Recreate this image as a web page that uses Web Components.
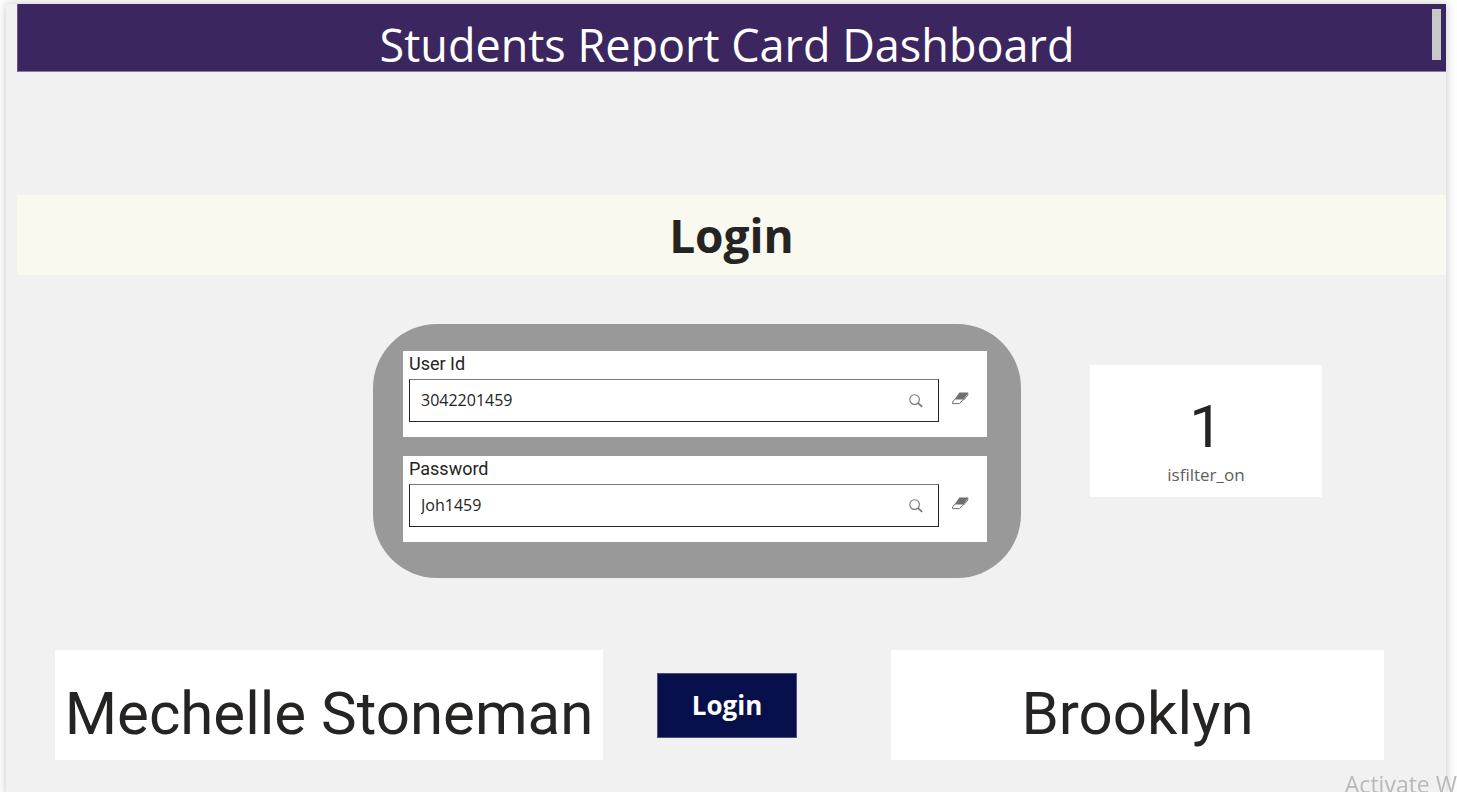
<!DOCTYPE html>
<html lang="en">
<head>
<meta charset="utf-8">
<title>Students Report Card Dashboard</title>
<style>
  html { height: 100%; }
  body { margin: 0; min-height: 100%; background: #fdfdfd; font-family: "Open Sans", "Noto Sans", sans-serif; color: #252423; }
</style>
</head>
<body>
<report-page>
  <report-header>Students Report Card Dashboard</report-header>
  <section-banner>Login</section-banner>
  <login-row>
    <login-panel slot="form">
      <slicer-field label="User Id" value="3042201459"></slicer-field>
      <slicer-field label="Password" value="Joh1459"></slicer-field>
    </login-panel>
    <value-card slot="status">1<span slot="caption">isfilter_on</span></value-card>
  </login-row>
  <result-row>
    <value-card slot="student">Mechelle Stoneman</value-card>
    <action-button slot="action">Login</action-button>
    <value-card slot="school">Brooklyn</value-card>
  </result-row>
</report-page>
<system-watermark>Activate W</system-watermark>

<script>
const define = (name, html, setup) => {
  customElements.define(name, class extends HTMLElement {
    constructor() {
      super();
      const template = document.createElement('template');
      template.innerHTML = html;
      this.attachShadow({ mode: 'open' }).append(template.content.cloneNode(true));
    }
    connectedCallback() { if (setup) setup(this, this.shadowRoot); }
  });
};

define('report-page', `
  <style>
    :host { display: block; padding: 4px 11px 0 6px; box-sizing: border-box; height: 100vh; overflow: hidden; }
    main { box-sizing: border-box; min-height: 100vh; padding-left: 11px; background: #f1f1f1; border-radius: 3px; box-shadow: 0 0 10px rgba(0,0,0,.22); }
  </style>
  <main><slot></slot></main>`);

define('report-header', `
  <style>
    :host { display: block; position: relative; box-sizing: border-box; height: 68px; padding-bottom: 5px; background: #3b2660; border-left: 1px solid #6a5590; border-bottom: 1px solid #8a76a8; }
    h1 { margin: 0; height: 62px; overflow: hidden; padding-right: 10px; text-align: center; font-weight: 400; font-size: 45px; line-height: 82px; color: #fff; white-space: nowrap; }
    i { position: absolute; top: 5px; right: 5px; width: 9px; height: 51px; background: #c8c8c8; }
  </style>
  <h1><slot></slot></h1><i></i>`);

define('section-banner', `
  <style>
    :host { display: block; margin-top: 123px; background: #f9f9f0; }
    h2 { margin: 0; text-align: center; font-size: 46px; line-height: 80px; font-weight: 700; }
  </style>
  <h2><slot></slot></h2>`);

define('login-row', `
  <style>
    :host { display: grid; margin-top: 49px; grid-template-columns: 356fr 648fr 69fr 232fr 124fr; align-items: start; }
    .form { grid-column: 2; min-width: 0; }
    .status { grid-column: 4; min-width: 0; margin-top: 41px; }
  </style>
  <div class="form"><slot name="form"></slot></div>
  <div class="status"><slot name="status"></slot></div>`);

define('login-panel', `
  <style>
    :host { display: flex; flex-direction: column; gap: 19px; padding: 27px 34px 36px 30px; border-radius: 64px; background: #999; }
  </style>
  <slot></slot>`);

define('slicer-field', `
  <style>
    :host { display: block; box-sizing: border-box; padding: 0 6px 15px; background: #fff; }
    label { display: block; font: 18px/25px Roboto, sans-serif; height: 28px; }
    .row { display: flex; align-items: center; }
    .box { flex: 1; min-width: 0; display: flex; align-items: center; box-sizing: border-box; height: 43px; border: 1px solid #252423; border-top-color: #777; padding: 0 9px 0 11px; }
    input { flex: 1; min-width: 0; border: 0; outline: 0; padding: 0 0 2px; background: none; color: #252423; font: 16px/24px "Open Sans", "Noto Sans", sans-serif; }
    button { border: 0; background: none; padding: 0; display: flex; justify-content: center; width: 26px; }
    .clear { width: 42px; padding-bottom: 4px; }
  </style>
  <label for="field"></label>
  <div class="row">
    <div class="box">
      <input id="field" type="text">
      <button type="button" aria-label="Search"><svg width="14" height="14" viewBox="0 0 14 14" fill="none" stroke="#757575"><circle cx="5.6" cy="5.6" r="4.8" stroke-width="1.1"/><path d="M9.1 9.1l4 3.8" stroke-width="1.7"/></svg></button>
    </div>
    <button class="clear" type="button" aria-label="Clear selection"><svg width="17" height="13" viewBox="0 0 17 13"><path d="M7.4 .5H16.4L11.6 7.4H2.5Z" fill="#6f6f6f"/><path d="M2.8 7.2L.6 10V11.6H7.5L11.3 7.4M15.8 1V3L11.6 8.2" fill="none" stroke="#6f6f6f"/></svg></button>
  </div>`, (host, root) => {
  root.querySelector('label').textContent = host.getAttribute('label');
  root.querySelector('input').value = host.getAttribute('value');
});

define('value-card', `
  <style>
    :host { display: flex; flex-direction: column; box-sizing: border-box; background: #fff; text-align: center; white-space: nowrap; }
    .value { height: 98px; padding-top: 12px; font: 60px/104px Roboto, sans-serif; }
    .value.captioned { height: 88px; padding-top: 10px; }
    .caption { font-size: 17px; line-height: 24px; color: #605e5c; }
    ::slotted(span) { display: block; height: 34px; }
  </style>
  <div class="value"><slot></slot></div>
  <div class="caption"><slot name="caption"></slot></div>`, (host, root) => {
  root.querySelector('.value').classList.toggle('captioned', !!host.querySelector('[slot=caption]'));
});

define('result-row', `
  <style>
    :host { display: grid; margin-top: 72px; grid-template-columns: 38fr 548fr 54fr 140fr 94fr 493fr 62fr; align-items: center; }
    div { min-width: 0; }
    .student { grid-column: 2; }
    .action { grid-column: 4; }
    .school { grid-column: 6; }
  </style>
  <div class="student"><slot name="student"></slot></div>
  <div class="action"><slot name="action"></slot></div>
  <div class="school"><slot name="school"></slot></div>`);

define('action-button', `
  <style>
    :host { display: block; }
    button { display: block; box-sizing: border-box; width: 100%; height: 65px; padding: 0; border: 1px solid #4b5185; background: #08104c; color: #fff; font: 700 26px/32px "Open Sans", "Noto Sans", sans-serif; }
  </style>
  <button type="button"><slot></slot></button>`);

define('system-watermark', `
  <style>
    :host { position: fixed; right: 0; bottom: -8px; font-size: 23px; line-height: 32px; color: #b9b9b9; white-space: nowrap; pointer-events: none; }
  </style>
  <slot></slot>`);
</script>
</body>
</html>
